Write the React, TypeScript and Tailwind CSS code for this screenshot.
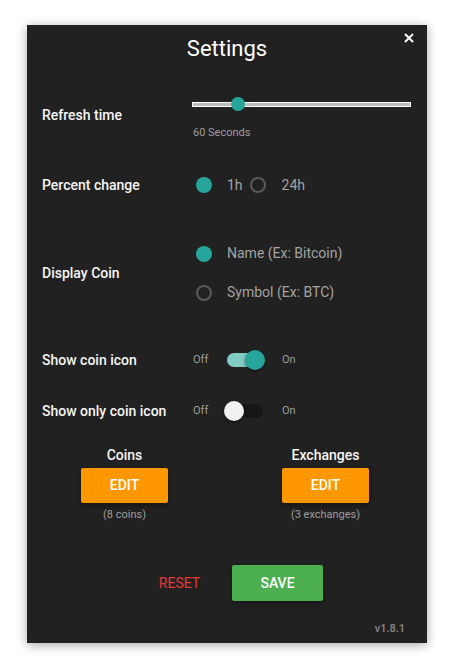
import React from 'react';

const Radio = ({ checked }: { checked: boolean }) =>
  checked ? (
    <span className="block w-4 h-4 rounded-full bg-[#26a69a]" />
  ) : (
    <span className="block w-4 h-4 rounded-full border-2 border-[#5a5a5a]" />
  );

const Toggle = ({ on }: { on: boolean }) => (
  <div className="relative w-[41px] h-5">
    <div
      className={`absolute left-[3px] top-[3px] w-[36px] h-[14px] rounded-full ${
        on ? 'bg-[#80cbc4]' : 'bg-[#161616]'
      }`}
    />
    <div
      className={`absolute top-0 w-5 h-5 rounded-full shadow-[0_1px_3px_rgba(0,0,0,0.5)] ${
        on ? 'left-[21px] bg-[#26a69a]' : 'left-0 bg-[#f1f1f1]'
      }`}
    />
  </div>
);

const Row = ({ label, className, children }: { label: string; className: string; children: React.ReactNode }) => (
  <div className={`flex items-center ${className}`}>
    <div className="w-[165px] pl-[15px] text-[14px] font-medium text-[#f5f5f5]">{label}</div>
    <div className="flex-1">{children}</div>
  </div>
);

export default function App() {
  return (
    <div className="min-h-screen bg-white pt-[25px] font-['Roboto',sans-serif]">
      <div className="relative mx-auto w-[400px] h-[618px] bg-[#212121] shadow-[0_2px_10px_rgba(0,0,0,0.35)] flex flex-col">
        <button className="absolute right-[13px] top-[8px] w-[10px] h-[10px]">
          <svg viewBox="0 0 10 10" className="w-[10px] h-[10px]">
            <path d="M1 1L9 9M9 1L1 9" stroke="#ffffff" strokeWidth="2" />
          </svg>
        </button>

        <div className="h-[46px] flex items-center justify-center text-[22px] text-white">Settings</div>

        <Row label="Refresh time" className="mt-[19px] h-[50px]">
          <div className="h-[50px] flex flex-col">
            <div className="relative h-[28px] w-[219px]">
              <div className="absolute left-0 right-0 top-[12px] h-[5px] bg-[#bdbdbd] border border-white" />
              <div className="absolute left-[39px] top-[7px] w-[14px] h-[14px] rounded-full bg-[#26a69a]" />
            </div>
            <div className="mt-[8px] text-[11px] leading-[14px] text-[#9e9e9e] pl-[1px]">60 Seconds</div>
          </div>
        </Row>

        <Row label="Percent change" className="mt-[27px] h-[36px]">
          <div className="flex items-center pl-[4px] text-[14px] text-[#a3a3a3]">
            <Radio checked />
            <span className="ml-[15px]">1h</span>
            <span className="ml-[7px]">
              <Radio checked={false} />
            </span>
            <span className="ml-[16px]">24h</span>
          </div>
        </Row>

        <Row label="Display Coin" className="mt-[31px] h-[78px]">
          <div className="flex flex-col pl-[4px] text-[14px] text-[#a3a3a3]">
            <div className="h-[39px] flex items-center">
              <Radio checked />
              <span className="ml-[15px]">Name (Ex: Bitcoin)</span>
            </div>
            <div className="h-[39px] flex items-center">
              <Radio checked={false} />
              <span className="ml-[15px]">Symbol (Ex: BTC)</span>
            </div>
          </div>
        </Row>

        <Row label="Show coin icon" className="mt-[30px] h-[36px]">
          <div className="flex items-center pl-[1px] text-[11px] text-[#9e9e9e]">
            <span className="w-[31px]">Off</span>
            <Toggle on />
            <span className="ml-[17px]">On</span>
          </div>
        </Row>

        <Row label="Show only coin icon" className="mt-[15px] h-[36px]">
          <div className="flex items-center pl-[1px] text-[11px] text-[#9e9e9e]">
            <span className="w-[31px]">Off</span>
            <Toggle on={false} />
            <span className="ml-[17px]">On</span>
          </div>
        </Row>

        <div className="mt-[16px] grid grid-cols-2 -ml-[3px] mr-[1px]">
          {[
            { title: 'Coins', sub: '(8 coins)' },
            { title: 'Exchanges', sub: '(3 exchanges)' },
          ].map((c) => (
            <div key={c.title} className="flex flex-col items-center">
              <div className="text-[14px] leading-[20px] font-medium text-[#f5f5f5]">{c.title}</div>
              <button className="mt-[3px] w-[87px] h-[35px] rounded-[2px] bg-[#ff9800] text-white text-[14px] font-medium shadow-[0_2px_4px_rgba(0,0,0,0.4)]">
                EDIT
              </button>
              <div className="mt-[5px] text-[11px] leading-[14px] text-[#9e9e9e]">{c.sub}</div>
            </div>
          ))}
        </div>

        <div className="mt-[43px] flex justify-center items-center pl-[12px]">
          <button className="w-[73px] h-[36px] text-[14px] text-[#e53935]">RESET</button>
          <button className="ml-[16px] w-[91px] h-[36px] rounded-[2px] bg-[#4caf50] text-white text-[14px] font-medium shadow-[0_2px_4px_rgba(0,0,0,0.4)]">
            SAVE
          </button>
        </div>

        <div className="mt-[21px] pr-[22px] text-right text-[11px] leading-[14px] font-medium text-[#8a8a8a]">v1.8.1</div>
      </div>
    </div>
  );
}
